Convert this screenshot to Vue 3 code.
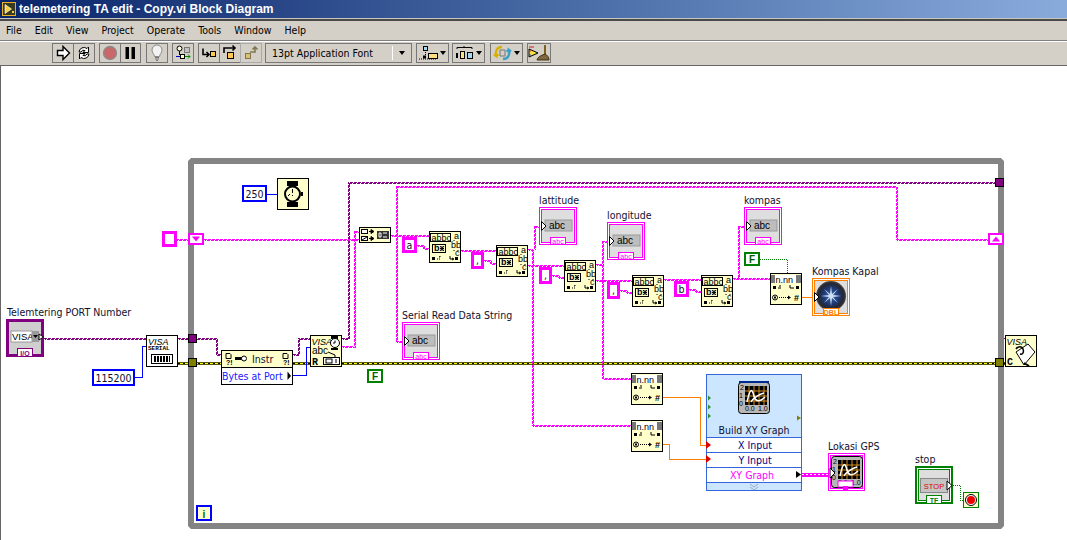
<script setup>
const menus = ['File', 'Edit', 'View', 'Project', 'Operate', 'Tools', 'Window', 'Help']

// wire routes, in page coordinates
const purpleWires = [
  'M44 338H146',
  'M178 338H216V354H221',
  'M293 354H298V338H310',
  'M342 338H348V182H995',
  'M1004 338H1006'
]
const stringWires = [
  'M176 239H188',
  'M204 239H359',
  'M342 346H354V231H359',
  'M391 235H429',
  'M396 341V186H896V239H988',
  'M396 341H404',
  'M417 245H423V248H429',
  'M461 250H496',
  'M484 260H490V263H496',
  'M528 249H533',
  'M534 249V226H543',
  'M532 249V425H631',
  'M528 265H564',
  'M552 275H558V277H564',
  'M596 264H602',
  'M602 241H611',
  'M602 241V378H631',
  'M596 280H632',
  'M620 290H626V292H632',
  'M664 279H701',
  'M689 289H695V291H701',
  'M733 278H770',
  'M738 278V226H748'
]
const blueWires = [
  'M267 194H277',
  'M135 377H142V346H146',
  'M293 375H306V347H310'
]
const orangeWires = [
  'M802 297H815',
  'M663 397H700V445H707',
  'M663 444H669V459H707'
]
const greenWires = [
  'M760 259H787V273',
  'M953 485H960V500H963'
]
const errorWires = [
  [178, 221],
  [293, 310],
  [342, 995],
  [1004, 1006]
]
const blueConstants = [
  { x: 242, y: 185, w: 25, h: 17, text: '250' },
  { x: 92, y: 369, w: 43, h: 17, text: '115200' }
]
const stringConstants = [
  { x: 402, y: 237, w: 15, h: 16, text: 'a' },
  { x: 471, y: 252, w: 13, h: 17, text: ',' },
  { x: 539, y: 267, w: 13, h: 17, text: ',' },
  { x: 607, y: 282, w: 13, h: 17, text: ',' },
  { x: 674, y: 281, w: 15, h: 16, text: 'b' }
]
const matchNodes = [
  { x: 429, y: 231 },
  { x: 496, y: 245 },
  { x: 564, y: 260 },
  { x: 632, y: 275 },
  { x: 701, y: 275 }
]
const convNodes = [
  { x: 770, y: 273 },
  { x: 631, y: 373 },
  { x: 631, y: 420 }
]
const stringIndicators = [
  { x: 402, y: 322, label: 'Serial Read Data String' },
  { x: 539, y: 207, label: 'lattitude' },
  { x: 607, y: 222, label: 'longitude' },
  { x: 744, y: 207, label: 'kompas' }
]
const graphRows = [
  { y: 437, text: 'X Input', cx: 755 },
  { y: 452, text: 'Y Input', cx: 755 },
  { y: 467, text: 'XY Graph', cx: 752, pink: true }
]
</script>

<template>
  <div class="window">
    <div class="titlebar">
      <svg class="title-icon" width="14" height="14" viewBox="0 0 14 14">
        <rect x="0.5" y="0.5" width="13" height="13" fill="#3a3a20" stroke="#e8b020" />
        <path d="M3 2.5L9.5 7L3 11.5Z" fill="#f8d040" stroke="#fff" stroke-width="0.6" />
        <rect x="10" y="9" width="2" height="2" fill="#f8d040" />
      </svg>
      <span class="title-text">telemetering TA edit - Copy.vi Block Diagram</span>
    </div>

    <div class="menubar">
      <span v-for="m in menus" :key="m" class="menu-item">{{ m }}</span>
    </div>

    <div class="toolbar">
      <div class="group run">
        <div class="btn">
          <svg width="16" height="18" viewBox="0 0 16 18"><path d="M2.5 6.5H8V2.5L14.500 9L8 15.500V11.500H2.500Z" fill="#fff" stroke="#000" stroke-width="1.400" /></svg>
        </div>
        <div class="btn">
          <svg width="16" height="18" viewBox="0 0 16 18">
            <path d="M3 8A5 5 0 0 1 11 4.500L12.500 3V8.500H7L9 6.500A3 3 0 0 0 5 8Z" fill="#fff" stroke="#000" />
            <path d="M13 10A5 5 0 0 1 5 13.500L3.500 15V9.500H9L7 11.500A3 3 0 0 0 11 10Z" fill="#fff" stroke="#000" />
          </svg>
        </div>
      </div>
      <div class="group abort">
        <div class="btn">
          <svg width="16" height="18" viewBox="0 0 16 18"><circle cx="8" cy="9" r="6.500" fill="#c8686a" stroke="#8a8a8a" stroke-width="1.300" /></svg>
        </div>
        <div class="btn">
          <svg width="16" height="18" viewBox="0 0 16 18"><path d="M3.500 3H7V15H3.500ZM9.500 3H13V15H9.500Z" fill="#000" /></svg>
        </div>
      </div>
      <div class="group bulb">
        <div class="btn">
          <svg width="16" height="18" viewBox="0 0 16 18">
            <path d="M5.500 12.500C5 9.500 3 9 3 6A5 5 0 0 1 13 6C13 9 11 9.500 10.500 12.500Z" fill="#f2f2f2" stroke="#8a8a8a" />
            <path d="M6 13.500H10M6 15H10M7 16.500H9" stroke="#777" fill="none" />
          </svg>
        </div>
      </div>
      <div class="group retain">
        <div class="btn">
          <svg width="16" height="18" viewBox="0 0 16 18">
            <circle cx="4.500" cy="4.500" r="2.500" fill="#f8f8e0" stroke="#000" />
            <path d="M4.500 7V11" stroke="#000" />
            <rect x="9.500" y="3.500" width="5" height="5" fill="#c0c0c0" stroke="#777" />
            <path d="M1 12.500H5" stroke="#00c" />
            <rect x="5.500" y="10.500" width="4" height="4" fill="#ffc" stroke="#000" />
            <path d="M10 12.500H15M13 10.500L15 12.500L13 14.500" stroke="#080" fill="none" />
          </svg>
        </div>
      </div>
      <div class="group step">
        <div class="btn">
          <svg width="17" height="18" viewBox="0 0 17 18">
            <path d="M2 4.500V10.500H8M5.500 8L8 10.500L5.500 13" stroke="#000" stroke-width="1.600" fill="none" />
            <rect x="9.500" y="7.500" width="5" height="5" fill="#ffc850" stroke="#000" />
          </svg>
        </div>
        <div class="btn">
          <svg width="17" height="18" viewBox="0 0 17 18">
            <path d="M2 9V4H13M10.500 1.500L13 4L10.500 6.500" stroke="#000" stroke-width="1.600" fill="none" />
            <rect x="5.500" y="8.500" width="6" height="6" fill="#ffc850" stroke="#000" />
          </svg>
        </div>
        <div class="btn btn-off">
          <svg width="17" height="18" viewBox="0 0 17 18">
            <rect x="2.500" y="9.500" width="5" height="5" fill="#d8c070" stroke="#807850" />
            <path d="M7 8H12V3M9.500 5.500L12 3L14.500 5.500" stroke="#807850" stroke-width="1.600" fill="none" />
          </svg>
        </div>
      </div>
      <div class="font-box">
        <span class="font-name">13pt Application Font</span>
        <span class="font-arrow"><i class="tri"></i></span>
      </div>
      <div class="drop align">
        <svg width="22" height="18" viewBox="0 0 22 18">
          <rect x="5.500" y="2.500" width="4" height="4" fill="#a8d8f0" stroke="#000" />
          <path d="M7.500 8V11M1 15H19" stroke="#000" stroke-dasharray="1 1" />
          <rect x="10.500" y="9.500" width="9" height="5" fill="#ffe080" stroke="#000" />
          <rect x="5" y="11.500" width="3" height="3" fill="#000" />
        </svg>
        <i class="tri"></i>
      </div>
      <div class="drop dist">
        <svg width="22" height="18" viewBox="0 0 22 18">
          <path d="M3 5V3.500H18V5M10 2V4" stroke="#000" fill="none" />
          <rect x="2" y="9" width="2" height="5" fill="#000" />
          <rect x="6.500" y="7.500" width="4" height="7" fill="#ffe080" stroke="#000" />
          <rect x="13.500" y="8.500" width="5" height="6" fill="#a8d8f0" stroke="#000" />
        </svg>
        <i class="tri"></i>
      </div>
      <div class="drop reorder">
        <svg width="22" height="18" viewBox="0 0 22 18">
          <path d="M10 3C5 3 3 7 4 12L2 10.500M4 12L6.500 10.500" stroke="#d8b000" stroke-width="2.400" fill="none" />
          <path d="M11 15C16 15 18 11 17 6L19 7.500M17 6L14.500 7.500" stroke="#3aa0c8" stroke-width="2.400" fill="none" />
          <path d="M8 6H13V12H8Z" fill="none" stroke="#777" />
        </svg>
        <i class="tri"></i>
      </div>
      <div class="group clean">
        <div class="btn">
          <svg width="22" height="18" viewBox="0 0 22 18">
            <path d="M1 5L10 9L1 13Z" fill="#f8e040" stroke="#000" />
            <path d="M1 3H6M1 7H3" stroke="#d02020" />
            <path d="M1 11H3" stroke="#2040d0" />
            <path d="M17 1V11" stroke="#806020" stroke-width="2" />
            <path d="M9 16C10 12 15 11 17 10C19 11 21 13 21 16Z" fill="#806840" stroke="#403010" />
          </svg>
        </div>
      </div>
    </div>

    <div class="canvas">
      <svg class="diagram" width="1067" height="474" viewBox="0 66 1067 474">
        <defs>
          <radialGradient id="compass-bg">
            <stop offset="0" stop-color="#3a66b0" />
            <stop offset="0.6" stop-color="#1c3468" />
            <stop offset="0.85" stop-color="#26262e" />
            <stop offset="1" stop-color="#4a4a4a" />
          </radialGradient>

          <g id="match-node">
            <rect x="0.500" y="0.500" width="31" height="31" fill="#ffffcc" stroke="#000" />
            <rect x="1.500" y="2.500" width="20" height="8" fill="none" stroke="#000" />
            <text class="tiny" x="2.500" y="9.500">abbc</text>
            <text class="tiny" x="25" y="8">a</text>
            <text class="tiny" x="22" y="17">bb</text>
            <text class="tiny" x="26" y="25">c</text>
            <rect x="3.500" y="13.500" width="13" height="8" fill="none" stroke="#000" />
            <text class="tiny bold" x="5" y="20">b</text>
            <path d="M11 15L15 20M15 15L11 20M13 15V20M11 17.500H15" stroke="#000" />
            <path d="M25 9V11M25 19V21M29 19V21" stroke="#000" stroke-dasharray="1 1" />
            <rect x="3" y="26" width="3" height="3" fill="#000" />
            <path d="M8 28H12M11 25V27M10 26H12" stroke="#000" stroke-dasharray="1 1" />
            <path d="M21 25V28H24M23 27L25 28L23 29" stroke="#000" fill="none" />
            <rect x="26" y="26" width="3" height="3" fill="#000" />
          </g>

          <g id="conv-node">
            <rect x="0.500" y="0.500" width="31" height="31" fill="#ffffcc" stroke="#000" />
            <rect x="1" y="2" width="30" height="8" fill="#777" />
            <rect x="5" y="2" width="21" height="8" fill="#fff" />
            <text class="tiny" x="5.500" y="9.500">n.nn</text>
            <rect x="3" y="13" width="3" height="3" fill="#000" />
            <path d="M8 15H11M10 12V14" stroke="#000" />
            <path d="M20 12V15H24" stroke="#000" fill="none" />
            <rect x="26" y="13" width="3" height="3" fill="#000" />
            <circle cx="5" cy="24.500" r="2.500" fill="none" stroke="#000" />
            <rect x="4" y="23.500" width="2" height="2" fill="#000" />
            <path d="M9 24.500H19" stroke="#000" stroke-dasharray="1 1" />
            <path d="M18 22.500L21 24.500L18 26.500Z" fill="#000" />
            <text class="tiny bold" x="24" y="28">#</text>
          </g>

          <g id="string-ind">
            <rect x="0.500" y="0.500" width="37" height="37" fill="#fff" stroke="#ff00ff" />
            <rect x="2.500" y="2.500" width="33" height="33" fill="#dedede" stroke="#ff00ff" />
            <rect x="6" y="13" width="27" height="11" fill="#bdbdbd" stroke="#999" />
            <text class="tiny2" x="10" y="22">abc</text>
            <path d="M2.500 14.500L7 19L2.500 23.500Z" fill="#fff" stroke="#000" />
            <rect x="11.500" y="30.500" width="15" height="7" fill="#fff" stroke="#ff00ff" />
            <text class="tag-pink" x="19" y="37">abc</text>
          </g>

          <g id="xy-plot">
            <rect x="0.500" y="0.500" width="31" height="31" rx="3" fill="#b8b8b8" stroke="#000" />
            <rect x="7" y="4" width="22" height="19" fill="#000" />
            <path d="M11 4V23M16 4V23M21 4V23M26 4V23M7 9H29M7 14H29M7 19H29" stroke="#d89020" />
            <path d="M9 20C12 6 14 6 16 14S24 18 27 15M13 20C15 16 22 12 26 11" stroke="#fff" stroke-width="1.500" fill="none" />
            <text class="micro" x="2" y="8">2</text>
            <text class="micro" x="1" y="16">1</text>
            <text class="micro" x="1" y="24">0</text>
            <text class="micro" x="7" y="29">0.0</text>
            <text class="micro" x="20" y="29">1.0</text>
          </g>
        </defs>

        <!-- while loop frame -->
        <path class="loop" d="M191 161H1001V526H191Z" />

        <!-- wires -->
        <g v-for="[a, b] in errorWires" :key="a">
          <path class="err-base" :d="`M${a} 363.500H${b}`" />
          <path class="err-mid" :d="`M${a} 363.500H${b}`" />
          <path class="err-dash" :d="`M${a} 363.500H${b}`" />
        </g>
        <g v-for="d in purpleWires" :key="d" class="wire-purple">
          <path class="wave" :d="d" />
          <path class="wave wave2" :d="d" />
        </g>
        <g v-for="d in stringWires" :key="d" class="wire-string">
          <path class="wave" :d="d" />
          <path class="wave wave2" :d="d" />
        </g>
        <path v-for="d in blueWires" :key="d" class="wire-blue" :d="d" />
        <path v-for="d in orangeWires" :key="d" class="wire-orange" :d="d" />
        <path v-for="d in greenWires" :key="d" class="wire-green" :d="d" />
        <path class="array-base" d="M802 474.500H830" />
        <path class="array-dash" d="M802 474.500H830" />

        <!-- tunnels and shift registers -->
        <rect class="tunnel-visa" x="188.500" y="334.500" width="8" height="8" />
        <rect class="tunnel-err" x="188.500" y="358.500" width="8" height="8" />
        <rect class="tunnel-visa" x="995.500" y="178.500" width="8" height="8" />
        <rect class="tunnel-err" x="995.500" y="358.500" width="8" height="8" />
        <rect class="shift" x="189" y="234" width="14" height="10" />
        <path d="M192 236.500H200L196 241.500Z" fill="#ff00ff" />
        <rect class="shift" x="989" y="234" width="14" height="10" />
        <path d="M992 241.500H1000L996 236.500Z" fill="#ff00ff" />

        <!-- constants -->
        <g v-for="c in blueConstants" :key="c.text">
          <rect class="const-blue" :x="c.x + 1" :y="c.y + 1" :width="c.w - 2" :height="c.h - 2" />
          <text class="label" :x="c.x + c.w / 2" :y="c.y + 13" text-anchor="middle">{{ c.text }}</text>
        </g>
        <g v-for="c in stringConstants" :key="c.x">
          <rect class="const-pink" :x="c.x + 1.500" :y="c.y + 1.500" :width="c.w - 3" :height="c.h - 3" />
          <text class="label" :x="c.x + c.w / 2" :y="c.y + 12" text-anchor="middle">{{ c.text }}</text>
        </g>
        <rect class="const-pink" x="163.500" y="232.500" width="12" height="13" />

        <!-- labels -->
        <text class="label" x="7" y="316">Telemtering PORT Number</text>
        <text class="label" x="812" y="275">Kompas Kapal</text>
        <text class="label" x="828" y="450">Lokasi GPS</text>
        <text class="label" x="915" y="463">stop</text>

        <!-- wait -->
        <g transform="translate(277 178)">
          <rect x="0.500" y="0.500" width="31" height="31" fill="#ffffcc" stroke="#000" />
          <rect x="10" y="3" width="11" height="5" fill="#000" />
          <rect x="10" y="24" width="11" height="5" fill="#000" />
          <circle cx="15.500" cy="16" r="7.500" fill="#ffffcc" stroke="#000" stroke-width="2" />
          <rect x="24" y="14" width="2" height="4" fill="#000" />
          <path d="M15.500 11V15M15.500 17V18M13 16L11 18" stroke="#000" fill="none" />
        </g>

        <!-- VISA resource control -->
        <g transform="translate(6 319)">
          <rect x="1" y="1" width="36" height="36" fill="#fff" stroke="#800080" stroke-width="2" />
          <rect x="2.500" y="2.500" width="33" height="33" fill="#cfcfcf" stroke="#800080" />
          <rect x="5" y="12" width="21" height="11" fill="#fff" stroke="#999" />
          <text class="visa-val" x="6" y="21">VISA</text>
          <rect x="26" y="12" width="7" height="11" fill="#9a9a9a" />
          <path d="M27 16H32L29.500 19Z" fill="#000" />
          <path d="M33 15L37.500 18L33 21Z" fill="#fff" stroke="#000" />
          <rect x="11.500" y="29.500" width="15" height="8" fill="#fff" stroke="#800080" />
          <text class="tag-purple" x="19" y="36.500">I/O</text>
        </g>

        <!-- VISA serial -->
        <g transform="translate(146 335)">
          <rect x="0.500" y="0.500" width="31" height="31" fill="#fff" stroke="#000" />
          <text class="visa-ital" x="2" y="10">VISA</text>
          <text class="serial" x="2" y="15">SERIAL</text>
          <rect x="5.500" y="19.500" width="21" height="9" fill="#fff" stroke="#000" />
          <path d="M8 21H24V27H8Z" fill="#000" />
          <path d="M10.500 21V27M13.500 21V27M16.500 21V27M19.500 21V27M22.500 21V27" stroke="#fff" />
        </g>

        <!-- property node -->
        <g transform="translate(221 350)">
          <rect x="0.500" y="0.500" width="71" height="17" fill="#ffffcc" stroke="#000" />
          <rect x="0.500" y="17.500" width="71" height="17" fill="#fff" stroke="#000" />
          <path d="M5 3.500H9L10 4.500V8.500H5ZM62 3.500H66L67 4.500V8.500H62Z" fill="#ffc" stroke="#000" />
          <text class="micro bold" x="5" y="15">?!</text>
          <text class="micro bold" x="62" y="15">?!</text>
          <path d="M14 8.500H21" stroke="#000" stroke-width="3" />
          <circle cx="23" cy="8.500" r="2.500" fill="#fff" stroke="#000" />
          <text class="label" x="31" y="13">Instr</text>
          <text class="label blue-text" x="1" y="30">Bytes at Port</text>
          <path d="M66.500 21.500L70 26L66.500 30Z" fill="#000" />
        </g>

        <!-- VISA read -->
        <g transform="translate(310 335)">
          <rect x="0.500" y="0.500" width="31" height="31" fill="#ffffcc" stroke="#000" />
          <text class="visa-ital" x="1.500" y="10">VISA</text>
          <rect x="21" y="1" width="7" height="3" fill="#000" />
          <circle cx="25" cy="8" r="4.500" fill="#fff" stroke="#000" />
          <path d="M25 5.500V8H23" stroke="#000" fill="none" />
          <rect x="21" y="13" width="7" height="2" fill="#000" />
          <text class="tiny2" x="2" y="19">abc</text>
          <path d="M18 17L25 20V22" stroke="#000" fill="none" />
          <text class="serial big" x="2" y="30">R</text>
          <rect x="13.500" y="22.500" width="16" height="7" fill="#fff" stroke="#000" />
          <rect x="16" y="24" width="6" height="4" fill="none" stroke="#000" />
          <path d="M25 25H27M25 27H27" stroke="#000" />
        </g>

        <!-- concatenate -->
        <g transform="translate(359 227)">
          <rect x="0.500" y="0.500" width="31" height="15" fill="#ffffcc" stroke="#000" />
          <rect x="2.500" y="2.500" width="6" height="4" fill="#fff" stroke="#000" />
          <path d="M10 4.500H14M12 2.500L15 4.500L12 6.500Z" stroke="#000" fill="#000" />
          <rect x="2.500" y="9.500" width="6" height="4" fill="#fff" stroke="#000" />
          <path d="M3 13L8 10" stroke="#000" />
          <path d="M10 11.500H14M12 9.500L15 11.500L12 13.500Z" stroke="#000" fill="#000" />
          <rect x="18" y="4" width="12" height="8" fill="#333" />
          <path d="M20 6H22V10H20ZM24 6H28M24 10H28" stroke="#fff" fill="none" />
        </g>

        <use v-for="n in matchNodes" :key="n.x" href="#match-node" :x="n.x" :y="n.y" />
        <use v-for="n in convNodes" :key="n.y" href="#conv-node" :x="n.x" :y="n.y" />

        <g v-for="s in stringIndicators" :key="s.x">
          <use href="#string-ind" :x="s.x" :y="s.y" />
          <text class="label" :x="s.x" :y="s.y - 3">{{ s.label }}</text>
        </g>

        <!-- compass gauge -->
        <g transform="translate(812 278)">
          <rect x="0.500" y="0.500" width="37" height="37" fill="#fff" stroke="#ff8000" />
          <rect x="2.500" y="2.500" width="33" height="33" fill="#dedede" stroke="#ff8000" />
          <circle cx="19" cy="18" r="15" fill="url(#compass-bg)" />
          <path d="M19 8L20 16L26 11L21 17L29 18L21 19L26 25L20 20L19 28L18 20L12 25L17 19L9 18L17 17L12 11L18 16Z" fill="#cfe0f4" />
          <path d="M2.500 14.500L7 19L2.500 23.500Z" fill="#fff" stroke="#000" />
          <rect x="11.500" y="30.500" width="15" height="7" fill="#fff" stroke="#ff8000" />
          <text class="tag-orange" x="19" y="37">DBL</text>
        </g>

        <!-- express VI -->
        <g transform="translate(706 374)">
          <rect x="0.500" y="0.500" width="95" height="116" fill="#cce6ff" stroke="#3366dd" />
          <path d="M2 21.500L5 24L2 26.500ZM2 30.500L5 33L2 35.500ZM2 39.500L5 42L2 44.500Z" fill="#2f8f2f" />
          <path d="M91 41.500L95 44L91 46.500Z" fill="#808000" />
        </g>
        <use href="#xy-plot" x="738" y="382" />
        <rect x="739" y="381" width="30" height="2" fill="#002a90" />
        <text class="label" x="754" y="434" text-anchor="middle">Build XY Graph</text>
        <g v-for="r in graphRows" :key="r.y">
          <rect x="706.500" :y="r.y + 0.500" width="95" height="15" fill="#fff" stroke="#3366dd" />
          <text class="label" :class="r.pink ? 'pink-text' : 'navy-text'" :x="r.cx" :y="r.y + 12" text-anchor="middle">{{ r.text }}</text>
        </g>
        <path d="M706 441L711 445L706 449ZM706 455L711 459L706 463Z" fill="#e00000" />
        <path d="M796 471L801 474.500L796 478Z" fill="#000" />
        <path d="M750 484L754 487L758 484M750 487L754 490L758 487" stroke="#9ab" fill="none" />

        <!-- XY graph indicator -->
        <g transform="translate(828 453)">
          <rect x="0.500" y="0.500" width="36" height="37" fill="#fff" stroke="#ff00ff" />
          <rect x="2.500" y="2.500" width="32" height="33" fill="#dedede" stroke="#ff00ff" />
        </g>
        <use href="#xy-plot" x="831" y="456" />
        <path d="M830 468L835 473L830 478Z" fill="#fff" stroke="#000" />
        <rect x="838" y="481" width="15" height="6" fill="#fff" stroke="#ff00ff" />
        <rect x="843" y="486" width="5" height="5" fill="#ff00ff" />

        <!-- stop -->
        <g transform="translate(915 466)">
          <rect x="1" y="1" width="36" height="36" fill="#fff" stroke="#008000" stroke-width="2" />
          <rect x="3.500" y="3.500" width="31" height="31" fill="#dedede" stroke="#008000" />
          <rect x="5.500" y="12.500" width="27" height="14" fill="#c4c4c4" stroke="#888" />
          <text class="stop-text" x="19" y="23">STOP</text>
          <path d="M32 15L37 19.500L32 24Z" fill="#fff" stroke="#000" />
          <rect x="11.500" y="29.500" width="15" height="8" fill="#fff" stroke="#008000" />
          <text class="tag-green" x="19" y="36.500">TF</text>
        </g>
        <g transform="translate(963 492)">
          <rect x="0.500" y="0.500" width="15" height="15" fill="#ffffcc" stroke="#008000" />
          <circle cx="8" cy="8" r="5.500" fill="#fff" stroke="#000" />
          <circle cx="8" cy="8" r="4" fill="#f00000" />
        </g>

        <!-- booleans and index -->
        <g transform="translate(367 369)">
          <rect x="1" y="1" width="14" height="12" class="const-green" />
          <text class="bool" x="8" y="11">F</text>
        </g>
        <g transform="translate(744 252)">
          <rect x="1" y="1" width="14" height="12" class="const-green" />
          <text class="bool" x="8" y="11">F</text>
        </g>
        <g transform="translate(196 505)">
          <rect x="1" y="1" width="14" height="14" class="const-index" />
          <text class="bool navy-text" x="8" y="12.500">i</text>
        </g>

        <!-- VISA close -->
        <g transform="translate(1005 335)">
          <rect x="0.500" y="0.500" width="31" height="31" fill="#ffffcc" stroke="#000" />
          <text class="visa-ital" x="1.500" y="10">VISA</text>
          <text class="serial big" x="2" y="30">C</text>
          <path d="M11 17L23 9L30 17L19 30Z" fill="#fff" stroke="#000" />
          <path d="M11 14C13 11 17 11 18 14S18 20 15 19" stroke="#000" stroke-width="1.500" fill="none" />
          <path d="M19 28L24 31" stroke="#000" stroke-width="2" />
        </g>
      </svg>
    </div>
  </div>
</template>

<style>
html,
body {
  margin: 0;
  background: #fff;
}
</style>

<style scoped>
.window {
  width: 1067px;
  height: 540px;
  display: flex;
  flex-direction: column;
  overflow: hidden;
  font-family: "DejaVu Sans Condensed", "DejaVu Sans", sans-serif;
  font-stretch: condensed;
  font-size: 10.500px;
}

.titlebar,
.menubar,
.toolbar {
  flex: none;
  box-sizing: border-box;
}

.titlebar {
  height: 19px;
  display: flex;
  align-items: center;
  gap: 3px;
  padding-left: 2px;
  background: linear-gradient(90deg, #0a246a, #4c6fa9 56%, #89abdc);
  border-bottom: 1px solid #c8c6c0;
}

.title-text {
  color: #fff;
  font-family: "Liberation Sans", Arial, sans-serif;
  font-stretch: normal;
  font-weight: bold;
  font-size: 12px;
  white-space: nowrap;
}

.menubar {
  height: 22px;
  display: flex;
  align-items: center;
  padding: 0 0 1px 6px;
  gap: 13px;
  background: #d4d0c8;
  border-top: 2px solid #4a4a4a;
  border-bottom: 1px solid #808080;
  color: #000;
}

.toolbar {
  height: 24px;
  margin-top: 1px;
  display: flex;
  align-items: flex-start;
  padding: 1px 0 0 52px;
  background: #d4d0c8;
  border-bottom: 1px solid #666;
}

.group,
.drop,
.font-box {
  height: 20px;
  flex: none;
  box-sizing: border-box;
  display: flex;
}

.group { margin-right: 4px; }

.btn {
  flex: 1;
  display: flex;
  align-items: center;
  justify-content: center;
  border: 1px solid #777;
  margin-left: -1px;
}

.btn:first-child {
  margin-left: 0;
}

.btn-off {
  border-color: #aaa;
}

.run { width: 43px; }
.abort {
  width: 42px;
  margin-right: 5px;
}
.bulb { width: 22px; }
.retain { width: 22px; }
.step {
  width: 64px;
  margin-right: 3px;
}
.clean { width: 24px; }

.font-box {
  width: 147px;
  align-items: center;
  border: 1px solid #777;
  margin-right: 4px;
  padding-left: 6px;
}

.font-name {
  flex: 1;
  white-space: nowrap;
}

.font-arrow {
  width: 18px;
  height: 14px;
  border-left: 1px solid #fff;
  display: flex;
  align-items: center;
  justify-content: center;
}

.tri {
  width: 0;
  height: 0;
  flex: none;
  border-left: 3px solid transparent;
  border-right: 3px solid transparent;
  border-top: 4px solid #000;
}

.drop {
  width: 33px;
  border: 1px solid #777;
  align-items: center;
  padding-left: 1px;
  margin-right: 3px;
}

.dist { margin-right: 5px; }
.reorder { margin-right: 4px; }

.canvas {
  flex: 1;
  position: relative;
  background: #fff;
  box-shadow: inset 1px 0 0 #666;
}

.diagram {
  position: absolute;
  left: 0;
  top: 0;
  display: block;
}

.loop {
  fill: none;
  stroke: #848484;
  stroke-width: 6;
  stroke-linejoin: bevel;
}

.label {
  font-family: "DejaVu Sans Condensed", "DejaVu Sans", sans-serif;
  font-stretch: condensed;
  font-size: 10.500px;
  fill: #101030;
}

.blue-text { fill: #2020ff; }
.navy-text { fill: #000080; }
.pink-text { fill: #ff00ff; }

.tiny {
  font-family: "Liberation Sans", Arial, sans-serif;
  font-size: 9px;
  fill: #000;
}

.tiny2 {
  font-family: "Liberation Sans", Arial, sans-serif;
  font-size: 10px;
  fill: #000;
}

.micro {
  font-family: "Liberation Sans", Arial, sans-serif;
  font-size: 7px;
  fill: #000;
}

.bold { font-weight: bold; }

.visa-ital {
  font-family: "Liberation Sans", Arial, sans-serif;
  font-size: 9px;
  font-style: italic;
  fill: #000;
}

.visa-val {
  font-family: "Liberation Sans", Arial, sans-serif;
  font-size: 9.500px;
  fill: #000;
}

.serial {
  font-family: "Liberation Mono", monospace;
  font-size: 6px;
  font-weight: bold;
  fill: #000;
}

.serial.big { font-size: 10px; }

.tag-pink,
.tag-orange,
.tag-purple,
.tag-green {
  font-family: "Liberation Sans", Arial, sans-serif;
  font-size: 7px;
  text-anchor: middle;
}

.tag-pink { fill: #ff00ff; }
.tag-orange { fill: #ff8000; font-weight: bold; }
.tag-purple { fill: #800080; font-weight: bold; }
.tag-green { fill: #008000; font-weight: bold; }

.stop-text {
  font-family: "Liberation Sans", Arial, sans-serif;
  font-size: 7.500px;
  fill: #e00000;
  text-anchor: middle;
}

.bool {
  font-family: "Liberation Sans", Arial, sans-serif;
  font-size: 10px;
  font-weight: bold;
  fill: #006000;
  text-anchor: middle;
}

.wave {
  fill: none;
  stroke-width: 1;
  stroke-dasharray: 3 1;
  shape-rendering: crispEdges;
}

.wave2 {
  stroke-dashoffset: 2;
  transform: translate(1px, 1px);
}

.wire-purple .wave { stroke: #800080; }
.wire-string .wave { stroke: #ff00ff; }

.wire-blue,
.wire-orange,
.wire-green {
  fill: none;
  shape-rendering: crispEdges;
}

.wire-blue { stroke: #0000ff; }
.wire-orange { stroke: #ff8000; }
.wire-green {
  stroke: #008000;
  stroke-dasharray: 1 1;
}

.err-base {
  fill: none;
  stroke: #5a5a10;
  stroke-width: 3;
  shape-rendering: crispEdges;
}

.err-mid {
  fill: none;
  stroke: #ffff00;
  stroke-width: 1;
  shape-rendering: crispEdges;
}

.err-dash {
  fill: none;
  stroke: #000;
  stroke-width: 1;
  stroke-dasharray: 2 3;
  shape-rendering: crispEdges;
}

.array-base {
  stroke: #ff00ff;
  stroke-width: 4;
  shape-rendering: crispEdges;
}

.array-dash {
  stroke: #fff;
  stroke-width: 1;
  stroke-dasharray: 2 2;
  shape-rendering: crispEdges;
}

.tunnel-visa {
  fill: #800080;
  stroke: #000;
}

.tunnel-err {
  fill: #808000;
  stroke: #000;
}

.shift {
  fill: #fff;
  stroke: #ff00ff;
  stroke-width: 2;
}

.const-blue {
  fill: #fff;
  stroke: #0000ff;
  stroke-width: 2;
}

.const-pink {
  fill: #fff;
  stroke: #ff00ff;
  stroke-width: 3;
}

.const-green {
  fill: #fff;
  stroke: #008000;
  stroke-width: 2;
}

.const-index {
  fill: #ffffcc;
  stroke: #0000ff;
  stroke-width: 2;
}
</style>
